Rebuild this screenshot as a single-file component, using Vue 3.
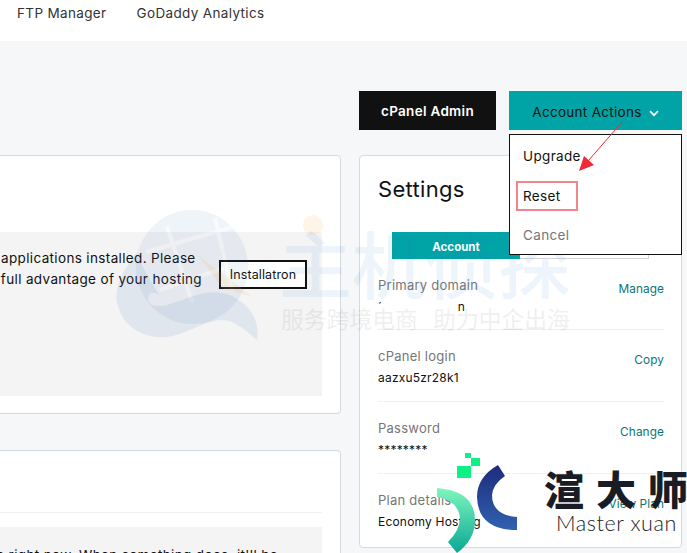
<script setup>
const rows = [
  { label: 'Primary domain', action: 'Manage' },
  { label: 'cPanel login', value: 'aazxu5zr28k1', action: 'Copy' },
  { label: 'Password', value: '********', action: 'Change' },
  { label: 'Plan details', value: 'Economy Hosting', action: 'View Plan' },
]
</script>

<template>
  <div class="page">
    <nav class="topnav">
      <a>FTP Manager</a>
      <a>GoDaddy Analytics</a>
    </nav>

    <main class="main">
      <div class="actions">
        <button class="btn dark">cPanel Admin</button>
        <div class="menu-wrap">
          <button class="btn teal">
            Account Actions
            <svg class="chev" width="10" height="7" viewBox="0 0 10 7"><path d="M1 1.2l4 4 4-4" fill="none" stroke="#fff" stroke-width="1.7"/></svg>
          </button>
          <ul class="menu">
            <li>Upgrade</li>
            <li>Reset</li>
            <li class="muted">Cancel</li>
          </ul>
        </div>
      </div>

      <div class="columns">
        <div class="left">
          <section class="card first">
            <div class="notice">
              <p class="notice-text">You don't see your applications installed. Please<br>install ones to take full advantage of your hosting</p>
              <button class="outline">Installatron</button>
            </div>
          </section>
          <section class="card second">
            <hr class="rule" />
            <div class="notice low">
              <p class="notice-text low-text">There's nothing to see here right now. When something does, it'll be</p>
            </div>
          </section>
        </div>

        <aside class="settings">
          <h2>Settings</h2>
          <div class="tabs">
            <div class="tab on">Account</div>
            <div class="tab"></div>
          </div>
          <div v-for="r in rows" :key="r.label" class="row">
            <div>
              <div class="label">{{ r.label }}</div>
              <div v-if="r.value" class="value">{{ r.value }}</div>
              <div v-else class="value redacted"><span>´</span><span>n</span></div>
            </div>
            <a class="link">{{ r.action }}</a>
          </div>
        </aside>
      </div>
    </main>

    <!-- annotations and watermarks lying over the screenshot -->
    <svg class="wm-logo" width="687" height="553" viewBox="0 0 687 553">
      <g opacity=".07">
        <ellipse cx="192" cy="267" rx="56" ry="57" fill="#2f6db5"/>
        <path d="M167 226L192 302M146 252L236 226M160 290L224 268M215 218L232 290" stroke="#fff" stroke-width="4" fill="none" opacity=".6"/>
      </g>
      <path d="M137 252C124 270 112 288 118 306C124 330 150 341 172 336C196 331 214 313 234 323C245 329 252 336 257 340C260 320 250 305 232 296C210 286 190 298 170 304C155 309 147 304 148 297C150 290 157 293 160 296C150 280 142 268 137 252Z" fill="#2f6db5" opacity=".1"/>
      <path d="M198 255L253 297L222 288Z" fill="#f8a340" opacity=".12"/>
      <circle cx="313" cy="225" r="10" fill="#f8a340" opacity=".12"/>
    </svg>
    <div class="wm-big">主机侦探</div>
    <div class="wm-small">服务跨境电商&nbsp;&nbsp;&nbsp;助力中企出海</div>

    <div class="reset-box"></div>
    <svg class="arrow" width="687" height="553" viewBox="0 0 687 553">
      <path d="M623 121L588 161" stroke="#ee2b36" stroke-width="1" fill="none"/>
      <path d="M579 171L584 156 594 165z" fill="#ee2b36"/>
    </svg>

    <svg class="brand" width="687" height="553" viewBox="0 0 687 553">
      <defs>
        <linearGradient id="gr" x1="0" y1="0" x2="0" y2="1"><stop offset="0" stop-color="#7ef6bd"/><stop offset="1" stop-color="#0aa796"/></linearGradient>
        <linearGradient id="bl" x1="0" y1="0" x2="0" y2="1"><stop offset="0" stop-color="#1f2b7d"/><stop offset="1" stop-color="#2f62b0"/></linearGradient>
      </defs>
      <rect x="457" y="466" width="14" height="12" fill="#0df083"/>
      <rect x="471" y="458" width="9" height="8" fill="#0df083"/>
      <rect x="465" y="453" width="6" height="5" fill="#0df083"/>
      <path d="M498 465Q477 477 477 497Q478 530 517 530L517 517Q492 515 492 495Q493 484 505 476Z" fill="url(#bl)"/>
      <path d="M437 488Q475 491 475 520Q475 540 457 553L448 542Q460 530 460 518Q458 500 437 497Z" fill="url(#gr)"/>
    </svg>
    <div class="brand-cn">渲大师</div>
    <div class="brand-en">Master xuan</div>
  </div>
</template>

<style>
html, body { margin: 0; overflow: hidden; }
</style>

<style scoped>
.page {
  position: relative;
  width: 687px;
  height: 553px;
  overflow: hidden;
  background: #f5f7f8;
  font-family: "Inter", "Liberation Sans", sans-serif;
  color: #111;
}
.topnav {
  height: 41px;
  background: #fff;
  display: flex;
  gap: 30px;
  padding: 4px 0 0 17px;
  box-sizing: border-box;
  font-size: 13.5px;
  line-height: 18px;
  letter-spacing: 0.35px;
  color: #333;
}
.main { padding: 50px 5px 0 0; }
.actions {
  display: flex;
  justify-content: flex-end;
  gap: 13px;
}
.btn {
  height: 39px;
  border: 0;
  border-radius: 0;
  font: inherit;
  font-size: 13.5px;
  letter-spacing: 0.3px;
  padding: 0;
}
.btn.dark { width: 137px; background: #111; color: #fff; font-weight: 600; }
.btn.teal { width: 173px; background: #00a4a6; color: #111; display: flex; align-items: center; justify-content: center; gap: 7px; padding-top: 2px; box-sizing: border-box; }
.chev { margin-top: 3px; }
.menu-wrap { position: relative; }
.menu {
  position: absolute;
  z-index: 3;
  top: 43px;
  left: 0;
  width: 173px;
  height: 121px;
  box-sizing: border-box;
  margin: 0;
  padding: 0;
  list-style: none;
  background: #fff;
  border: 1px solid #111;
  font-size: 13.5px;
  letter-spacing: 0.35px;
}
.menu li { height: 39.5px; line-height: 20px; padding: 11px 0 0 13px; box-sizing: border-box; }
.menu .muted { color: #767676; }

.columns { display: flex; gap: 18px; margin-top: 25px; }
.left { width: 361px; margin-left: -20px; flex: none; }
.card {
  background: #fff;
  border: 1px solid #d4dbe0;
  border-radius: 4px;
  box-sizing: border-box;
}
.first { height: 259px; padding: 76px 18px 0 0; }
.notice {
  background: #f4f4f4;
  height: 164px;
  display: flex;
  gap: 17px;
  align-items: flex-start;
  justify-content: flex-end;
  padding: 16px 15px 0 0;
  box-sizing: border-box;
  overflow: hidden;
}
.notice-text {
  margin: 0;
  white-space: nowrap;
  font-size: 13.5px;
  line-height: 21px;
  letter-spacing: 0.35px;
  color: #111;
}
.outline {
  flex: none;
  width: 88px;
  height: 29px;
  margin-top: 12px;
  box-sizing: border-box;
  background: #fff;
  border: 2px solid #111;
  border-radius: 0;
  font: inherit;
  font-size: 12.5px;
  letter-spacing: 0.1px;
  color: #111;
  padding: 0;
}
.second { height: 200px; margin-top: 36px; padding: 61px 18px 0 0; }
.rule { margin: 0; border: 0; border-top: 1px solid #f0f0f0; }
.low { margin-top: 14px; padding: 18px 0 0 0; }
.low-text { margin-right: 44px; }

.settings {
  width: 323px;
  height: 393px;
  flex: none;
  box-sizing: border-box;
  background: #fff;
  border: 1px solid #d4dbe0;
  border-radius: 4px;
  padding: 18px 17px 0 18px;
}
h2 {
  margin: 0;
  font-size: 22px;
  line-height: 31px;
  font-weight: 400;
  letter-spacing: 0.3px;
  color: #111;
}
.tabs { display: flex; margin: 27px 15px 0 14px; height: 27px; }
.tab {
  flex: 1;
  box-sizing: border-box;
  border: 1px solid #d4d4d4;
  border-left: 0;
  font-size: 11.5px;
  font-weight: 700;
  line-height: 31px;
  text-align: center;
  color: #fff;
}
.tab.on { background: #00a4a6; border: 0; }
.row {
  height: 72px;
  box-sizing: border-box;
  display: flex;
  justify-content: space-between;
  align-items: flex-start;
  padding-top: 16px;
  border-bottom: 1px solid #eef0f1;
}
.tabs + .row { height: 71px; padding-top: 16px; }
.row:last-child { border-bottom: 0; }
.label { font-size: 13px; line-height: 20px; letter-spacing: 0.25px; color: #767676; }
.value { font-size: 12px; line-height: 20px; margin-top: 2px; letter-spacing: 0.2px; color: #111; }
.redacted { display: flex; width: 87px; justify-content: space-between; }
.link { font-size: 11.8px; line-height: 18px; margin-top: 5px; letter-spacing: 0.1px; color: #09757a; }

.wm-logo, .arrow, .brand { position: absolute; left: 0; top: 0; pointer-events: none; }
.wm-logo { z-index: 1; }
.wm-big {
  position: absolute; z-index: 1; left: 279px; top: 219px;
  font: 500 73px/84px "Noto Sans CJK SC", sans-serif;
  white-space: nowrap; color: #2f7bd0; opacity: .08;
}
.wm-small {
  position: absolute; z-index: 1; left: 281px; top: 303px;
  font: 400 22.8px/32px "Noto Sans CJK SC", sans-serif;
  white-space: nowrap; color: #000; opacity: .06;
}
.reset-box {
  position: absolute; z-index: 4; left: 516px; top: 181px; width: 62px; height: 30px;
  box-sizing: border-box; border: 2px solid #f2848b;
}
.arrow { z-index: 5; }
.brand { z-index: 6; }
.brand-cn {
  position: absolute; z-index: 6; left: 544px; top: 461px;
  font: 900 40px/54px "Noto Sans CJK SC", sans-serif;
  letter-spacing: 12px; white-space: nowrap; color: #1a1c25;
}
.brand-en {
  position: absolute; z-index: 6; left: 556px; top: 509px;
  font: 300 21.5px/28px "Lato", sans-serif;
  letter-spacing: 0.6px; white-space: nowrap; color: #1a1c25;
}
</style>
